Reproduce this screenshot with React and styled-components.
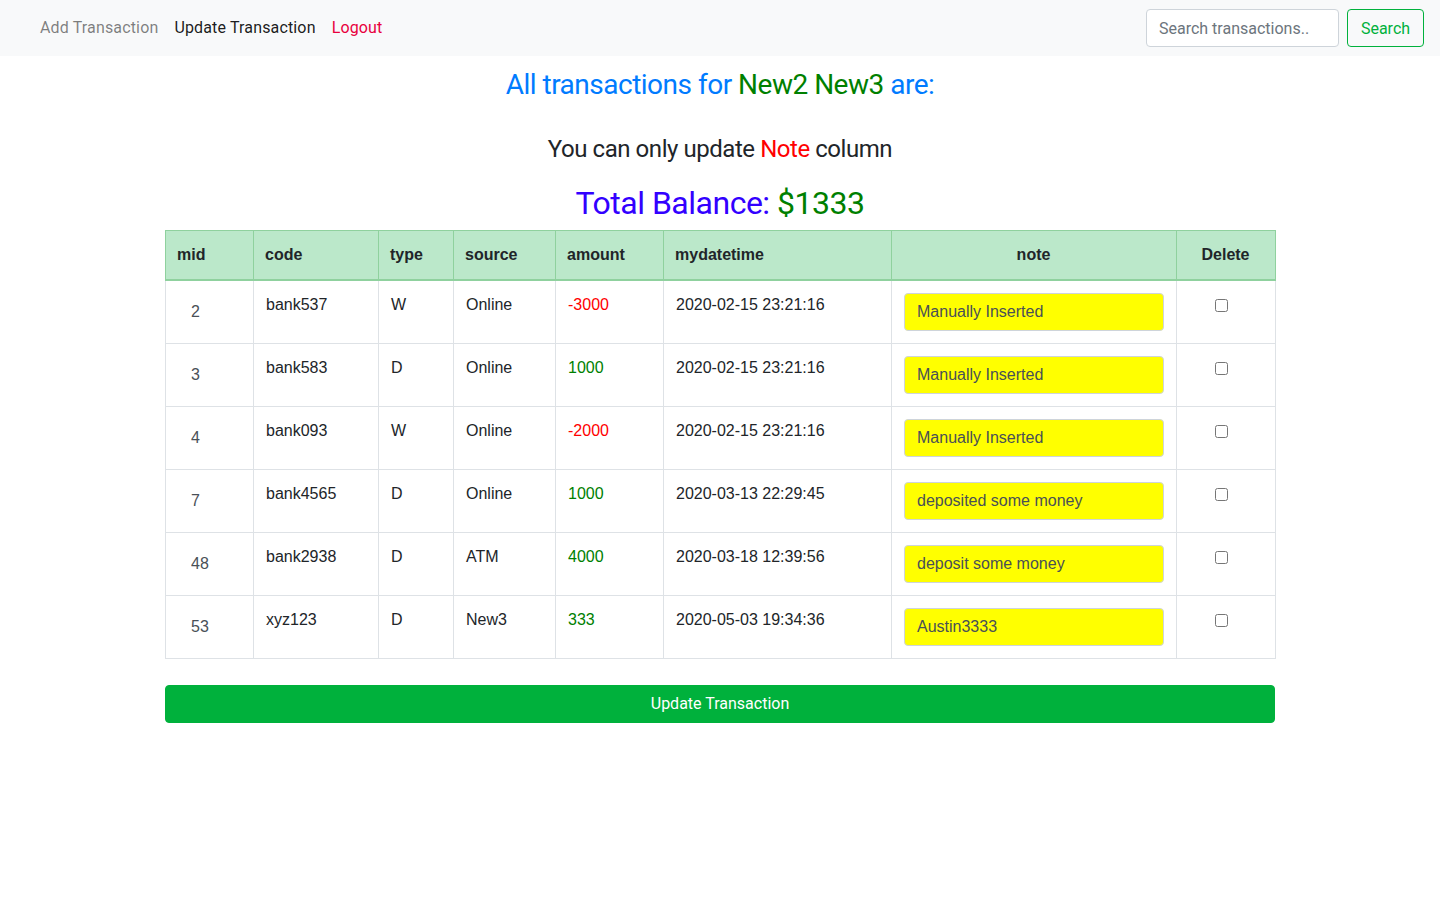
import React, { useState } from "react";
import styled, { createGlobalStyle } from "styled-components";

const GlobalStyle = createGlobalStyle`
  * { box-sizing: border-box; }
  body {
    margin: 0;
    font-family: Roboto, "Noto Sans", "Liberation Sans", sans-serif;
    font-size: 16px;
    line-height: 1.5;
    color: #212529;
    background: #fff;
  }
`;

const initialRows = [
  { mid: 2, code: "bank537", type: "W", source: "Online", amount: -3000, date: "2020-02-15 23:21:16", note: "Manually Inserted" },
  { mid: 3, code: "bank583", type: "D", source: "Online", amount: 1000, date: "2020-02-15 23:21:16", note: "Manually Inserted" },
  { mid: 4, code: "bank093", type: "W", source: "Online", amount: -2000, date: "2020-02-15 23:21:16", note: "Manually Inserted" },
  { mid: 7, code: "bank4565", type: "D", source: "Online", amount: 1000, date: "2020-03-13 22:29:45", note: "deposited some money" },
  { mid: 48, code: "bank2938", type: "D", source: "ATM", amount: 4000, date: "2020-03-18 12:39:56", note: "deposit some money" },
  { mid: 53, code: "xyz123", type: "D", source: "New3", amount: 333, date: "2020-05-03 19:34:36", note: "Austin3333" },
];

const columns = [
  { key: "mid", label: "mid", width: 88 },
  { key: "code", label: "code", width: 125 },
  { key: "type", label: "type", width: 75 },
  { key: "source", label: "source", width: 102 },
  { key: "amount", label: "amount", width: 108 },
  { key: "date", label: "mydatetime", width: 228 },
  { key: "note", label: "note", width: 285, center: true },
  { key: "del", label: "Delete", width: 99, center: true },
];

const App = () => {
  const [rows, setRows] = useState(initialRows);
  const [checked, setChecked] = useState({});

  const handleNote = (mid, value) => {
    setRows((prev) => prev.map((r) => (r.mid === mid ? { ...r, note: value } : r)));
  };

  const total = rows.reduce((sum, r) => sum + r.amount, 0);

  return (
    <>
      <GlobalStyle />
      <Navbar>
        <NavLinks>
          <NavLink href="#">Add Transaction</NavLink>
          <NavLink href="#" $active>Update Transaction</NavLink>
          <NavLink href="#" $danger>Logout</NavLink>
        </NavLinks>
        <SearchForm onSubmit={(e) => e.preventDefault()}>
          <SearchInput type="search" placeholder="Search transactions.." />
          <SearchButton type="submit">Search</SearchButton>
        </SearchForm>
      </Navbar>

      <Container>
        <Title>
          All transactions for <Green>New2 New3</Green> are:
        </Title>
        <Subtitle>
          You can only update <Red>Note</Red> column
        </Subtitle>
        <Balance>
          Total Balance: <Green>${total}</Green>
        </Balance>

        <Table>
          <colgroup>
            {columns.map((c) => (
              <col key={c.key} style={{ width: c.width }} />
            ))}
          </colgroup>
          <thead>
            <tr>
              {columns.map((c) => (
                <Th key={c.key} $center={c.center}>
                  {c.label}
                </Th>
              ))}
            </tr>
          </thead>
          <tbody>
            {rows.map((r) => (
              <tr key={r.mid}>
                <Td>
                  <MidInput readOnly value={r.mid} />
                </Td>
                <Td>{r.code}</Td>
                <Td>{r.type}</Td>
                <Td>{r.source}</Td>
                <Td>
                  <Amount $negative={r.amount < 0}>{r.amount}</Amount>
                </Td>
                <Td>{r.date}</Td>
                <Td>
                  <NoteInput value={r.note} onChange={(e) => handleNote(r.mid, e.target.value)} />
                </Td>
                <Td $center>
                  <Checkbox
                    type="checkbox"
                    checked={!!checked[r.mid]}
                    onChange={() => setChecked((p) => ({ ...p, [r.mid]: !p[r.mid] }))}
                  />
                </Td>
              </tr>
            ))}
          </tbody>
        </Table>

        <UpdateButton type="button">Update Transaction</UpdateButton>
      </Container>
    </>
  );
};

const Navbar = styled.nav`
  display: flex;
  align-items: center;
  justify-content: space-between;
  height: 56px;
  padding: 0 16px 0 32px;
  background: #f8f9fa;
`;

const NavLinks = styled.div`
  display: flex;
  align-items: center;
`;

const NavLink = styled.a`
  padding: 8px;
  font-size: 16px;
  letter-spacing: 0.15px;
  text-decoration: none;
  color: ${(p) => (p.$danger ? "#e8003d" : p.$active ? "rgba(0, 0, 0, 0.9)" : "rgba(0, 0, 0, 0.5)")};
`;

const SearchForm = styled.form`
  display: flex;
  align-items: center;
  gap: 8px;
`;

const SearchInput = styled.input`
  width: 193px;
  height: 38px;
  padding: 6px 12px;
  font-family: inherit;
  font-size: 16px;
  color: #495057;
  background: #fff;
  border: 1px solid #ced4da;
  border-radius: 4px;
  outline: none;

  &::placeholder {
    color: #6c757d;
  }
`;

const SearchButton = styled.button`
  width: 77px;
  height: 38px;
  font-family: inherit;
  font-size: 16px;
  color: #00b13c;
  background: transparent;
  border: 1px solid #00b13c;
  border-radius: 4px;
  cursor: pointer;
`;

const Container = styled.main`
  width: 1110px;
  margin: 0 auto;
  text-align: center;
`;

const Title = styled.h3`
  margin: 12px 0 0;
  font-size: 28px;
  font-weight: 400;
  line-height: 1.2;
  letter-spacing: -0.5px;
  color: #007bff;
`;

const Subtitle = styled.h4`
  margin: 33px 0 0;
  font-size: 24px;
  font-weight: 400;
  line-height: 1.2;
  letter-spacing: -0.45px;
  color: #212529;
`;

const Balance = styled.h2`
  margin: 21px 0 7px;
  font-size: 32px;
  font-weight: 400;
  line-height: 1.2;
  letter-spacing: -0.5px;
  color: #3300ff;
`;

const Green = styled.span`
  color: #008000;
`;

const Red = styled.span`
  color: #ff0000;
`;

const Table = styled.table`
  width: 1110px;
  table-layout: fixed;
  border-collapse: collapse;
  font-family: "Liberation Sans", Arial, sans-serif;
  text-align: left;
  color: #212529;
`;

const Th = styled.th`
  padding: 12px 12px 12px 11px;
  font-weight: 700;
  line-height: 24px;
  text-align: ${(p) => (p.$center ? "center" : "left")};
  background: #bbe8ca;
  border: 1px solid #8fd19e;
  border-bottom-width: 2px;
`;

const Td = styled.td`
  padding: 12px;
  vertical-align: top;
  line-height: 24px;
  text-align: ${(p) => (p.$center ? "center" : "left")};
  border: 1px solid #dee2e6;
`;

const MidInput = styled.input`
  display: block;
  width: 100%;
  height: 38px;
  padding: 6px 12px;
  font-family: inherit;
  font-size: 16px;
  color: #495057;
  background: transparent;
  border: 1px solid transparent;
  outline: none;
`;

const NoteInput = styled.input`
  display: block;
  width: 100%;
  height: 38px;
  padding: 6px 12px;
  font-family: inherit;
  font-size: 16px;
  color: #495057;
  background: #ffff00;
  border: 1px solid #ced4da;
  border-radius: 4px;
  outline: none;
`;

const Amount = styled.span`
  color: ${(p) => (p.$negative ? "#ff0000" : "#008000")};
`;

const Checkbox = styled.input`
  width: 13px;
  height: 13px;
  margin: 6px 9px 0 0;
  vertical-align: top;
`;

const UpdateButton = styled.button`
  display: block;
  width: 100%;
  height: 38px;
  margin-top: 26px;
  font-family: Roboto, sans-serif;
  font-size: 16px;
  color: #fff;
  background: #00b13c;
  border: 1px solid #00b13c;
  border-radius: 4px;
  cursor: pointer;
`;

export default App;
